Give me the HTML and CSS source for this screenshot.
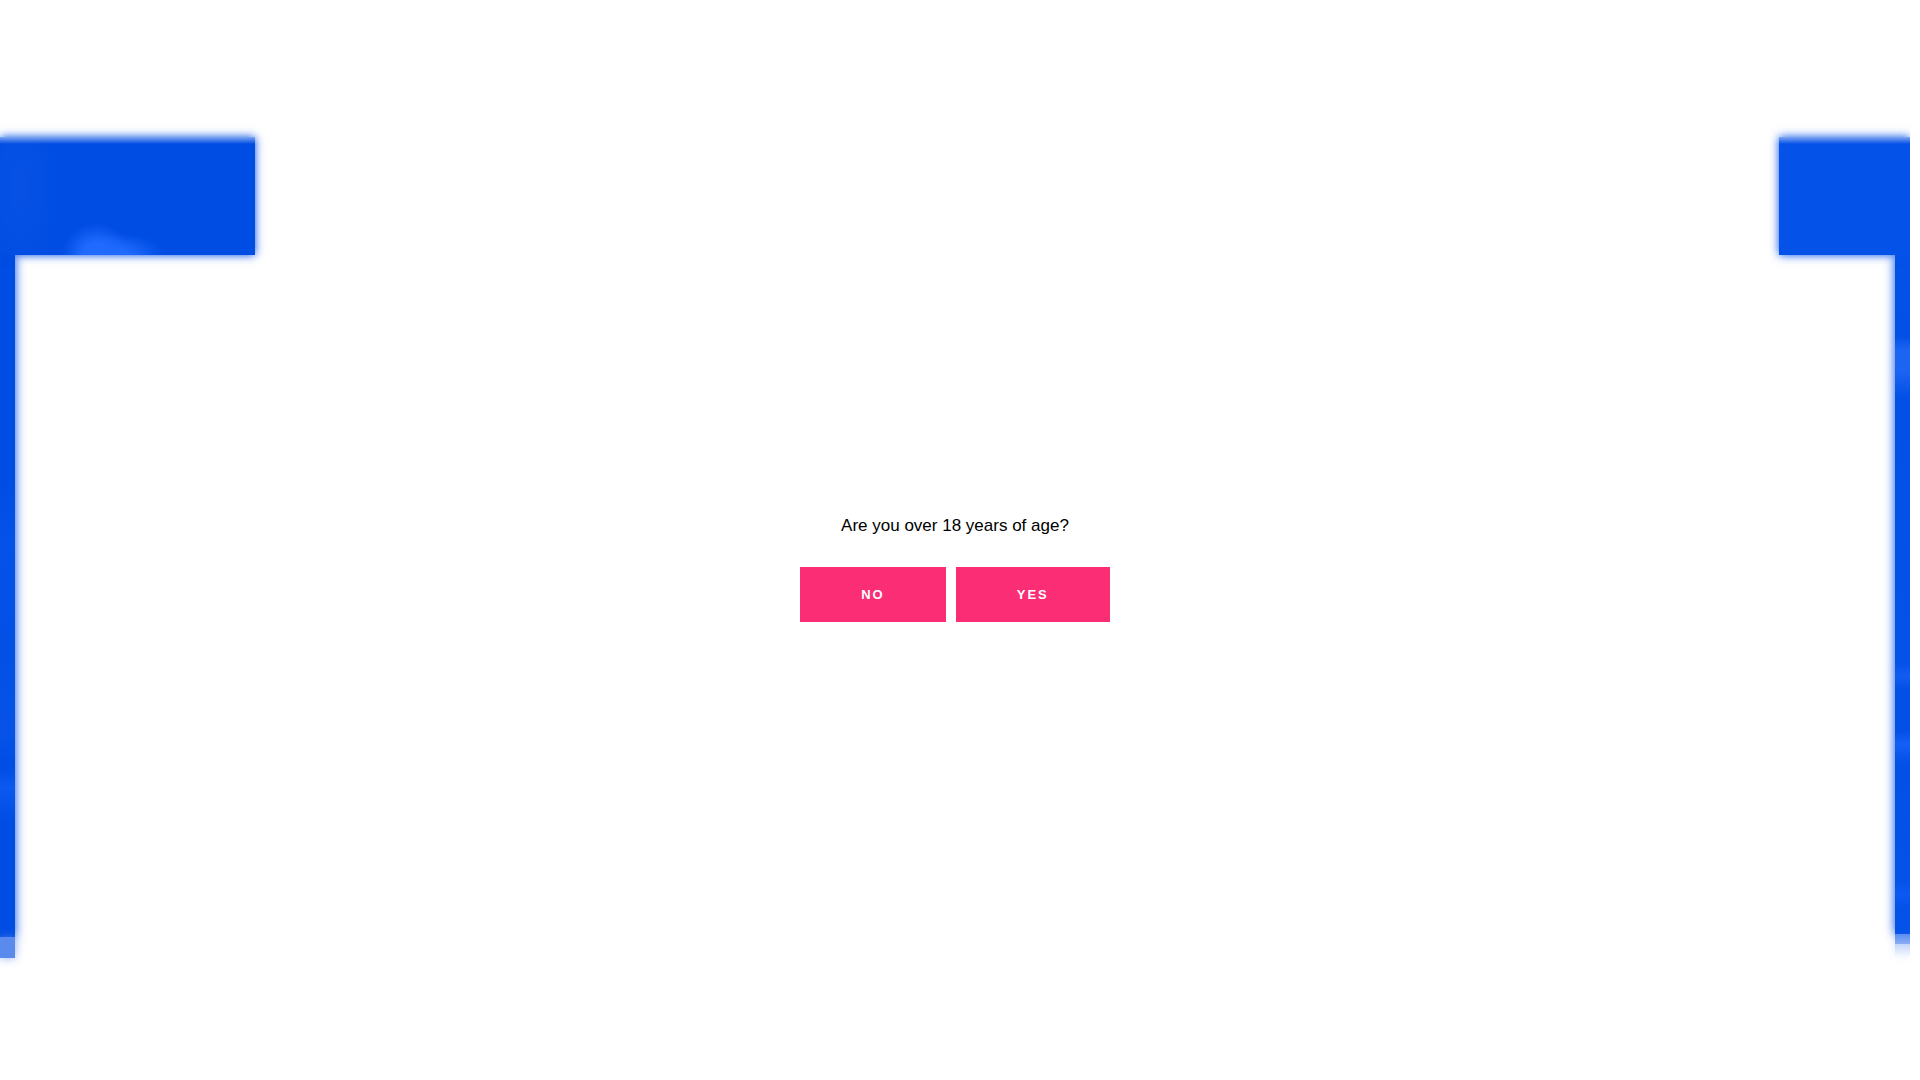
FILE: index.html
```
<!DOCTYPE html>
<html lang="en">
<head>
    <meta charset="UTF-8">
    <meta name="viewport" content="width=device-width, initial-scale=1.0">
    <title>Age check</title>
    <link rel="stylesheet" href="styles.css">
</head>
<body>
    <div class="page">
        <div class="side side-left" aria-hidden="true">
            <div class="block"></div>
            <div class="strip"></div>
            <div class="fade"></div>
        </div>
        <main class="age-gate">
            <p id="question">Are you over 18 years of age?</p>
            <div class="buttons" role="group" aria-labelledby="question">
                <button type="button">NO</button>
                <button type="button">YES</button>
            </div>
        </main>
        <div class="side side-right" aria-hidden="true">
            <div class="block"></div>
            <div class="strip"></div>
            <div class="fade"></div>
        </div>
    </div>
</body>
</html>
```

FILE: styles.css
```
body {
    font-family: "Liberation Sans", Arial, sans-serif;
    background-color: #fff;
    margin: 0;
    padding-right: 10px;
}
.page {
    display: grid;
    grid-template-columns: 1fr auto 1fr;
    min-height: 100vh;
    overflow: hidden;
}

/* age question */
.age-gate {
    align-self: center;
    padding-top: 54px;
    text-align: center;
}
.age-gate p {
    margin: 0 0 28px;
    font-size: 17px;
    line-height: 26px;
    color: #000;
}
.buttons {
    display: flex;
    justify-content: center;
    gap: 10px;
}
button {
    height: 55px;
    padding: 0 61px;
    border: 0;
    background-color: #fa2d75;
    color: #fff;
    font-family: inherit;
    font-size: 13px;
    font-weight: bold;
    letter-spacing: 2px;
    cursor: pointer;
}

/* blurred picture showing at both edges */
.side {
    display: flex;
    flex-direction: column;
    padding: 137px 0 122px;
    overflow: hidden;
}
.side-right {
    align-items: flex-end;
    padding-bottom: 125px;
}
.block {
    position: relative;
    flex: none;
    height: 118px;
    box-shadow: 0 0 9px #004de3;
}
.side-left .block {
    width: 255px;
    background: linear-gradient(#7fa6f1, rgba(0, 77, 227, 0) 7px),
        radial-gradient(ellipse 34px 32px at 96px 118px, #206aff 35%, rgba(32, 106, 255, 0)),
        radial-gradient(ellipse 46px 22px at 118px 118px, #206aff 20%, rgba(32, 106, 255, 0)),
        radial-gradient(ellipse 40px 90px at 20px 50px, #0852e5, rgba(8, 82, 229, 0)),
        #004de3;
}
.side-right .block {
    width: 131px;
    background: linear-gradient(#7fa6f1, rgba(5, 82, 233, 0) 7px), #0552e9;
    box-shadow: 0 0 9px #0552e9;
}
.strip {
    flex: 1;
    width: 15px;
    box-shadow: 0 0 11px #004de3;
}
.side-left .strip {
    background: linear-gradient(#004de3 0%, #004de3 33%, #0552e9 42%, #0350e5 58%, #0753e8 70%, #004de3 75%, #0b59ee 78%, #004de3 83%);
}
.side-right .strip {
    background: linear-gradient(#0552e9 0%, #0250e6 12%, #1c65f3 14%, #1c65f3 17%, #0250e6 21%, #0552e9 60%, #125cf0 62%, #0250e6 64%, #0250e6 70%, #155ff5 72%, #0250e6 75%, #0552e9 92%, #0b59f0 94%, #0552e9 96%);
}
.fade {
    flex: none;
    width: 15px;
    height: 21px;
    background-color: #5a8aec;
    box-shadow: 0 0 10px rgba(90, 138, 236, 0.7);
}
.side-right .fade {
    background: linear-gradient(#5a8df2, #8aaef5 10px, #c3d5fa 10px, #f0f5fe);
    box-shadow: 0 0 10px rgba(90, 138, 236, 0.2);
}
```
